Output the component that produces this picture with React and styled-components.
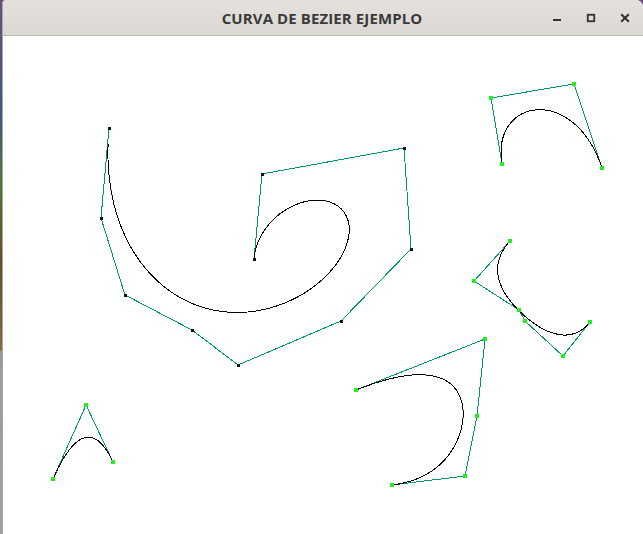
import React from 'react';
import styled, { createGlobalStyle } from 'styled-components';

// Глобальные стили страницы
const GlobalStyle = createGlobalStyle`
  html, body {
    margin: 0;
    padding: 0;
    width: 643px;
    height: 534px;
    overflow: hidden;
  }
  body {
    background: linear-gradient(to bottom, #6b4f7a 0px, #3d5a80 120px, #4c7a3a 180px, #6a4a2c 260px, #8a6a3a 350px, #9a9a9a 351px, #a0a0a0 100%);
    font-family: "Open Sans", "DejaVu Sans", sans-serif;
  }
`;

// Окно приложения
const Window = styled.div`
  margin-left: 2px;
  width: 641px;
  height: 534px;
  display: flex;
  flex-direction: column;
  border-left: 1px solid #a8a8a8;
  border-radius: 4px 7px 0 0;
  overflow: hidden;
  background: #ffffff;
  box-sizing: border-box;
`;

// Заголовок окна
const TitleBar = styled.div`
  height: 35px;
  flex: 0 0 35px;
  display: grid;
  grid-template-columns: 1fr auto 1fr;
  align-items: center;
  background: linear-gradient(to bottom, #e4e1de, #dbd8d4);
  border-bottom: 1px solid #b8b4ae;
`;

const Title = styled.div`
  grid-column: 2;
  font-family: "Open Sans", "DejaVu Sans", sans-serif;
  font-weight: 700;
  font-size: 15px;
  color: #3a3a3a;
  letter-spacing: 0.1px;
  margin-left: -2px;
  padding-top: 1px;
`;

const Controls = styled.div`
  grid-column: 3;
  justify-self: end;
  display: flex;
  align-items: center;
  padding-right: 1px;
`;

const CtrlButton = styled.div`
  width: 34px;
  height: 20px;
  display: flex;
  align-items: center;
  justify-content: center;
`;

// Холст с кривыми
const Canvas = styled.svg`
  display: block;
  flex: 1;
  width: 100%;
  background: #ffffff;
`;

const LINE = '#00996f';

// Кривые Безье: контрольные точки и цвет маркеров
const curves = [
  {
    pts: [[109, 128], [101, 218], [125, 295], [192, 330], [238, 365], [341, 321], [411, 249], [404, 148], [262, 174], [254, 259]],
    marker: 'black',
    t0: 0.02,
  },
  { pts: [[502, 164], [491, 98], [574, 84], [602, 168]], marker: 'green', t0: 0 },
  { pts: [[510, 241], [474, 281], [519, 310], [525, 321], [563, 356], [590, 322]], marker: 'green', t0: 0 },
  { pts: [[356, 390], [485, 339], [477, 416], [465, 476], [392, 485]], marker: 'green', t0: 0 },
  { pts: [[53, 479], [86, 405], [113, 462]], marker: 'green', t0: 0 },
];

// Алгоритм де Кастельжо
const bezier = (pts, t) => {
  let p = pts.map(q => [...q]);
  while (p.length > 1) {
    const n = [];
    for (let i = 0; i < p.length - 1; i++) {
      n.push([p[i][0] + (p[i + 1][0] - p[i][0]) * t, p[i][1] + (p[i + 1][1] - p[i][1]) * t]);
    }
    p = n;
  }
  return p[0];
};

const curvePoints = (pts, t0) => {
  const out = [];
  const steps = 300;
  for (let i = 0; i <= steps; i++) {
    const t = t0 + (1 - t0) * (i / steps);
    const [x, y] = bezier(pts, t);
    out.push(`${x.toFixed(1)},${y.toFixed(1)}`);
  }
  return out.join(' ');
};

const Marker = ({ x, y, kind }) =>
  kind === 'black' ? (
    <rect x={x - 1.5} y={y - 1.5} width={3} height={3} fill="#111" />
  ) : (
    <rect x={x - 2} y={y - 2} width={4} height={4} fill="#22ee22" />
  );

const App = () => (
  <>
    <GlobalStyle />
    <Window>
      <TitleBar>
        <Title>CURVA DE BEZIER EJEMPLO</Title>
        <Controls>
          <CtrlButton>
            <svg width="10" height="10" viewBox="0 0 10 10">
              <rect x="1" y="6" width="8" height="2" fill="#2e3436" />
            </svg>
          </CtrlButton>
          <CtrlButton>
            <svg width="10" height="10" viewBox="0 0 10 10">
              <rect x="1.75" y="1.75" width="6.5" height="6.5" fill="none" stroke="#2e3436" strokeWidth="1.8" />
            </svg>
          </CtrlButton>
          <CtrlButton>
            <svg width="10" height="10" viewBox="0 0 10 10">
              <path d="M1.2 1.2 L8.8 8.8 M8.8 1.2 L1.2 8.8" stroke="#2e3436" strokeWidth="2" />
            </svg>
          </CtrlButton>
        </Controls>
      </TitleBar>
      <Canvas viewBox="3 36 640 498" preserveAspectRatio="xMinYMin meet" shapeRendering="crispEdges">
        {curves.map((c, i) => (
          <g key={i}>
            <polyline points={c.pts.map(p => p.join(',')).join(' ')} fill="none" stroke={LINE} strokeWidth="1" />
            <polyline points={curvePoints(c.pts, c.t0)} fill="none" stroke="#000" strokeWidth="1" />
            {c.pts.map((p, j) => (
              <Marker key={j} x={p[0]} y={p[1]} kind={c.marker} />
            ))}
          </g>
        ))}
      </Canvas>
    </Window>
  </>
);

export default App;
